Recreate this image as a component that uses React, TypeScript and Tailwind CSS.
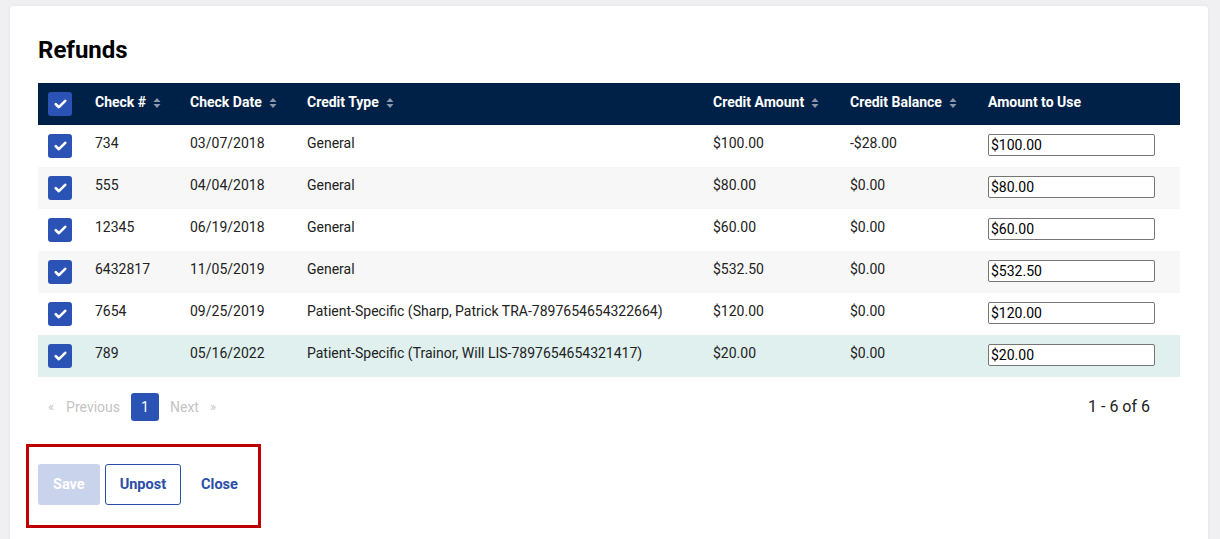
import { useState } from 'react'

interface Refund {
  check: string
  date: string
  type: string
  amount: string
  balance: string
}

const refunds: Refund[] = [
  { check: '734', date: '03/07/2018', type: 'General', amount: '$100.00', balance: '-$28.00' },
  { check: '555', date: '04/04/2018', type: 'General', amount: '$80.00', balance: '$0.00' },
  { check: '12345', date: '06/19/2018', type: 'General', amount: '$60.00', balance: '$0.00' },
  { check: '6432817', date: '11/05/2019', type: 'General', amount: '$532.50', balance: '$0.00' },
  {
    check: '7654',
    date: '09/25/2019',
    type: 'Patient-Specific (Sharp, Patrick TRA-7897654654322664)',
    amount: '$120.00',
    balance: '$0.00',
  },
  {
    check: '789',
    date: '05/16/2022',
    type: 'Patient-Specific (Trainor, Will LIS-7897654654321417)',
    amount: '$20.00',
    balance: '$0.00',
  },
]

function Check() {
  return (
    <span className="flex w-6 h-6 items-center justify-center rounded-[3px] bg-[#2b52b5]">
      <svg width="13" height="10" viewBox="0 0 13 10" fill="none">
        <path d="M1.8 5.2 4.9 8.2 11.2 1.8" stroke="white" strokeWidth="2.6" strokeLinecap="round" strokeLinejoin="round" />
      </svg>
    </span>
  )
}

function SortIcon() {
  return (
    <svg width="8" height="12" viewBox="0 0 8 12" className="ml-[7px] inline-block">
      <path d="M0.5 5 4 1 7.5 5Z" fill="#8d97aa" />
      <path d="M0.5 7 4 11 7.5 7Z" fill="#8d97aa" />
    </svg>
  )
}

function Header({ label, sort = true }: { label: string; sort?: boolean }) {
  return (
    <th className="px-[10px] pb-[3px] text-left align-middle font-bold text-white text-[14px]">
      <span className="inline-flex items-center">
        {label}
        {sort && <SortIcon />}
      </span>
    </th>
  )
}

export default function App() {
  const [values, setValues] = useState(refunds.map(r => r.amount))

  return (
    <div className="min-h-[539px] bg-[#f0f0f2] pt-[6px] pl-[10px] pr-[12px] font-['Roboto',sans-serif] text-[#222]">
      <div className="bg-white rounded-[4px] shadow-[0_0_4px_rgba(0,0,0,0.06)] px-[28px] pt-[28px] pb-[40px] min-h-[560px]">
        <h1 className="text-[24px] leading-[32px] font-bold text-black">Refunds</h1>

        <table className="mt-[17px] w-full table-fixed border-collapse text-[14px]">
          <colgroup>
            <col className="w-[47px]" />
            <col className="w-[95px]" />
            <col className="w-[117px]" />
            <col className="w-[406px]" />
            <col className="w-[137px]" />
            <col className="w-[138px]" />
            <col />
          </colgroup>
          <thead>
            <tr className="h-[42px] bg-[#002147]">
              <th className="pl-[10px] pb-[1px] align-middle">
                <Check />
              </th>
              <Header label="Check #" />
              <Header label="Check Date" />
              <Header label="Credit Type" />
              <Header label="Credit Amount" />
              <Header label="Credit Balance" />
              <Header label="Amount to Use" sort={false} />
            </tr>
          </thead>
          <tbody>
            {refunds.map((r, i) => (
              <tr
                key={r.check}
                className={
                  i === refunds.length - 1 ? 'h-[42px] bg-[#dff0ef]' : i % 2 === 1 ? 'h-[42px] bg-[#f7f7f7]' : 'h-[42px] bg-white'
                }
              >
                <td className="pl-[10px] pt-[9px] align-top">
                  <Check />
                </td>
                <td className="px-[10px] pt-[8px] align-top leading-[20px]">{r.check}</td>
                <td className="px-[10px] pt-[8px] align-top leading-[20px]">{r.date}</td>
                <td className="px-[10px] pt-[8px] align-top leading-[20px] whitespace-nowrap">{r.type}</td>
                <td className="px-[10px] pt-[8px] align-top leading-[20px]">{r.amount}</td>
                <td className="px-[10px] pt-[8px] align-top leading-[20px]">{r.balance}</td>
                <td className="px-[10px] pt-[9px] align-top">
                  <input
                    value={values[i]}
                    onChange={e => setValues(v => v.map((x, j) => (j === i ? e.target.value : x)))}
                    className="block w-[167px] h-[22px] border border-[#767676] rounded-[2px] px-[2px] text-[14px] text-black bg-white outline-none"
                  />
                </td>
              </tr>
            ))}
          </tbody>
        </table>

        <div className="mt-[16px] flex items-center justify-between">
          <div className="flex items-center text-[14px] text-[#c4c4c4]">
            <span className="ml-[10px] text-[13px]">«</span>
            <span className="ml-[12px]">Previous</span>
            <span className="ml-[11px] flex w-[28px] h-[28px] items-center justify-center rounded-[3px] bg-[#2b52b5] text-white">1</span>
            <span className="ml-[11px]">Next</span>
            <span className="ml-[11px] text-[13px]">»</span>
          </div>
          <span className="mr-[30px] text-[16px] text-[#222]">1 - 6 of 6</span>
        </div>

        <div className="mt-[23px] -ml-[12px] inline-flex gap-[5px] border-[3px] border-[#c00000] pl-[9px] pr-[5px] pt-[17px] pb-[20px]">
          <button className="h-[41px] px-[15px] rounded-[3px] bg-[#c9d3ec] text-white font-bold text-[14.5px]">Save</button>
          <button className="h-[41px] px-[14px] rounded-[3px] border border-[#2b4ea8] text-[#2b4ea8] font-bold text-[14.5px]">Unpost</button>
          <button className="h-[41px] px-[15px] rounded-[3px] text-[#2b4ea8] font-bold text-[14.5px]">Close</button>
        </div>
      </div>
    </div>
  )
}
